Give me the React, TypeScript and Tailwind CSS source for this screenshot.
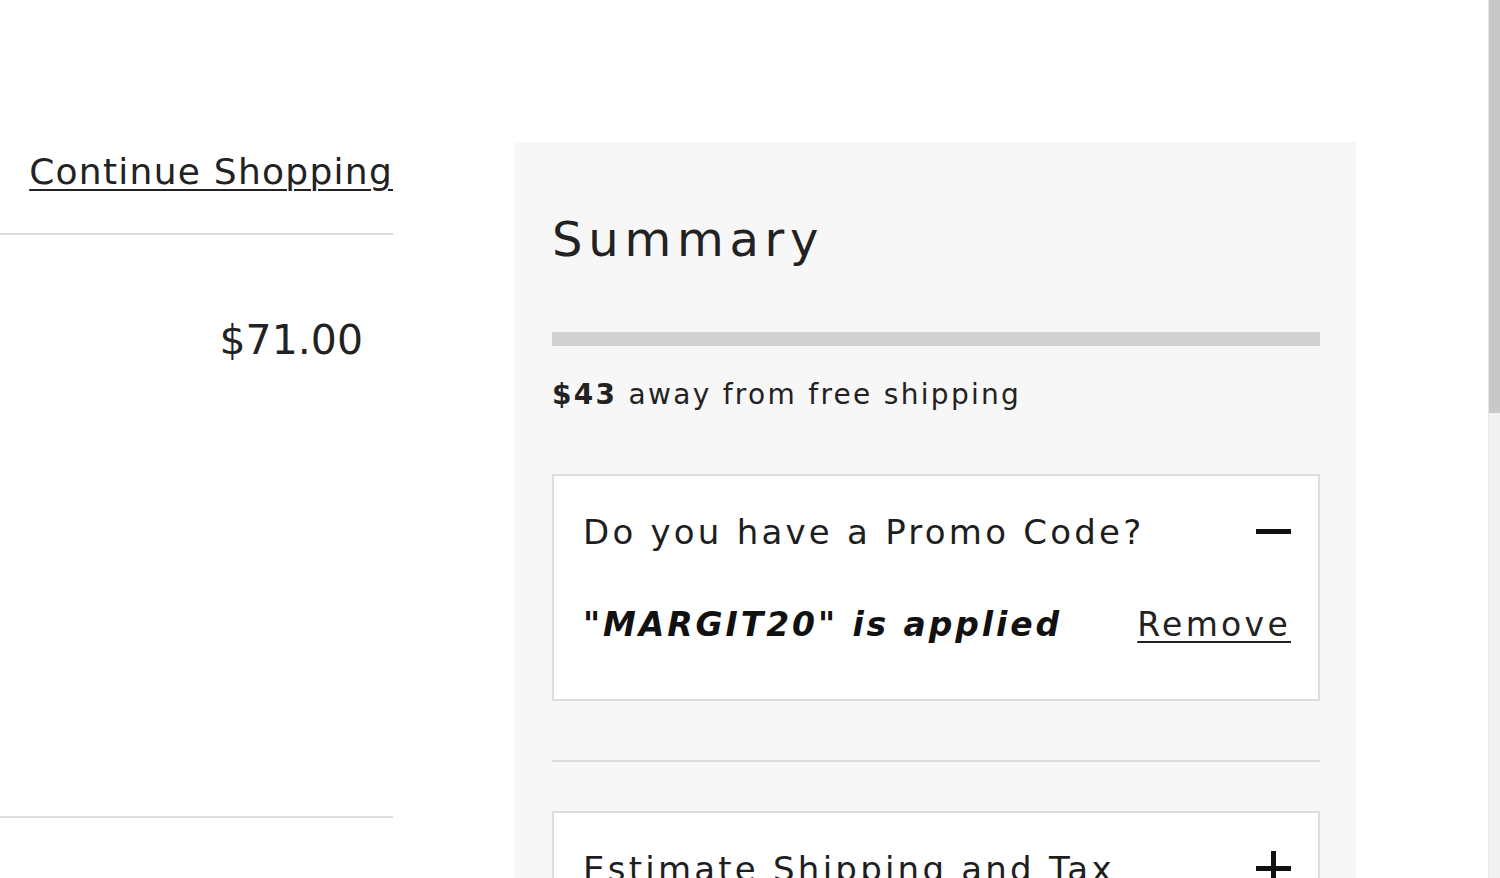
import { ReactNode } from 'react';

const font = { fontFamily: '"DejaVu Sans", "Liberation Sans", sans-serif' };

function PromoBox({ title, open, children }: { title: string; open: boolean; children?: ReactNode }) {
  return (
    <div className="border-2 border-[#dcdcdc] bg-white pl-[29px] pr-[27px] pt-[38px] pb-[58px]">
      <div className="flex items-center justify-between">
        <h3 className="text-[34px] leading-none tracking-[0.095em] text-[#1e1e1e]">{title}</h3>
        {/* toggle icon */}
        <div className="relative w-[35px] h-[35px] flex items-center justify-center">
          <span className="block w-[35px] h-[5px] bg-[#111]" />
          {!open && <span className="absolute block w-[5px] h-[35px] bg-[#111]" />}
        </div>
      </div>
      {children}
    </div>
  );
}

export default function App() {
  return (
    <div className="flex h-[878px] w-[1500px] overflow-hidden bg-white text-[#1e1e1e]" style={font}>
      <div className="flex flex-1">
        {/* Cart column */}
        <div className="w-[393px] shrink-0 pt-[154px]">
          <div className="flex justify-end">
            <a href="#" className="text-[36px] leading-none tracking-[0.035em] text-[#222] underline decoration-2 underline-offset-[5px]">
              Continue Shopping
            </a>
          </div>
          <div className="mt-[43px] h-[2px] bg-[#dcdcdc]" />
          <div className="mt-[85px] pr-[30px] text-right text-[41px] leading-none text-[#222]">$71.00</div>
          <div className="mt-[455px] h-[2px] bg-[#dcdcdc]" />
        </div>

        {/* Summary panel */}
        <aside className="ml-[121px] mt-[142px] w-[842px] shrink-0 bg-[#f7f7f7] pl-[38px] pr-[36px] pt-[73px]">
          <h2 className="text-[48px] leading-none tracking-[0.12em] text-[#222]">Summary</h2>

          <div className="mt-[69px] h-[14px] bg-[#d1d1d1]" />

          <p className="mt-[35px] text-[28px] leading-none tracking-[0.082em] text-[#222]">
            <span className="font-bold">$43</span> away from free shipping
          </p>

          <div className="mt-[65px]">
            <PromoBox title="Do you have a Promo Code?" open>
              <div className="mt-[59px] flex items-end justify-between">
                <span className="text-[33px] leading-none font-bold italic tracking-[0.088em] text-[#111]">
                  "MARGIT20" is applied
                </span>
                <a href="#" className="text-[33px] leading-none tracking-[0.1em] text-[#222] underline decoration-2 underline-offset-[5px]">
                  Remove
                </a>
              </div>
            </PromoBox>
          </div>

          <div className="mt-[59px] h-[2px] bg-[#dcdcdc]" />

          <div className="mt-[49px]">
            <PromoBox title="Estimate Shipping and Tax" open={false} />
          </div>
        </aside>
      </div>

      {/* Scrollbar */}
      <div className="w-[12px] shrink-0 border-l border-[#e6e6e6] bg-[#f1f1f1]">
        <div className="h-[413px] bg-[#c8c8c8]" />
      </div>
    </div>
  );
}
